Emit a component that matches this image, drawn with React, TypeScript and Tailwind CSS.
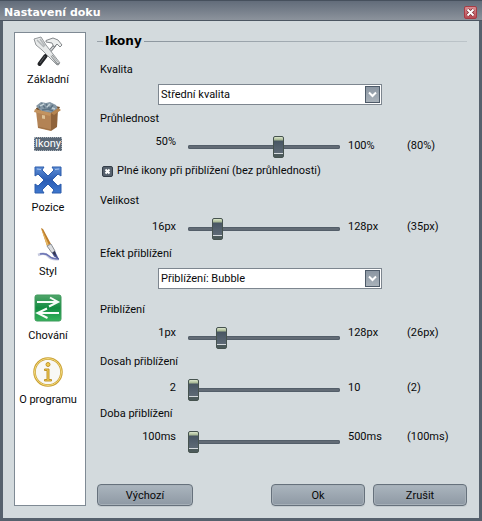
import { useState } from "react";

type Align = "raised" | "middle" | "mixed";

const leftLeading: Record<Align, string> = {
  raised: "leading-[14px]",
  middle: "leading-5",
  mixed: "leading-[14px]",
};
const rightLeading: Record<Align, string> = {
  raised: "leading-[14px]",
  middle: "leading-5",
  mixed: "leading-[22px]",
};

function ToolsIcon() {
  return (
    <svg width="32" height="32" viewBox="0 0 32 32" aria-hidden="true">
      <path d="M23 9 9 26" stroke="#6a6e72" strokeWidth="3" strokeLinecap="round" />
      <path d="M23 9 9 26" stroke="#d0d3d5" strokeWidth="1.500" />
      <path d="M13.500 20 7.500 28" stroke="#222427" strokeWidth="4" strokeLinecap="round" />
      <path d="M13 20 8 27" stroke="#5a5e62" strokeWidth="1" />
      <path d="M14 4.500 21 2l5 2 4 5-2 2-3-3-3 3-2-4-6-1z" fill="#eceeee" stroke="#84888b" strokeWidth="1" />
      <path d="M2 3 9 1l5 8 14 18-3 2L10 14 4 9z" fill="#e8eaea" stroke="#94989b" strokeWidth="1" />
      <path d="M5 4 12 11M8 3l5 7" stroke="#b2b6b8" strokeWidth="1.500" />
      <path d="m20 20 6 8" stroke="#8e9294" strokeWidth="2.500" strokeLinecap="round" />
      <path d="m19 19 7 8" stroke="#e2e4e4" strokeWidth="1" />
    </svg>
  );
}

function BoxIcon() {
  return (
    <svg width="32" height="32" viewBox="0 0 32 32" aria-hidden="true">
      <path d="M4 8 14 4l14 3-3 6H5z" fill="#72502f" />
      <path d="m4 6 5-4 5 1 4-1 6 3 2 4-7 4-9-1z" fill="#8698a6" />
      <path d="m7 8 3-4 3 4M14 4l4 5 3-4M10 10l6-1 5 2" stroke="#5d7384" strokeWidth="1.500" fill="none" />
      <path d="m8 6 4-2M15 7l3-3M20 8l3 1" stroke="#c2d0d6" strokeWidth="1.500" />
      <path d="m4 11 15 2v18L6 28z" fill="#b38355" />
      <path d="m19 13 7-3-1 17-6 4z" fill="#8f633b" />
      <path d="m3 9 16 4-1 3-16-4z" fill="#c3935f" />
      <path d="m19 13 7-5 3 2-7 5z" fill="#b58450" />
      <path d="m10 15 3 .5V19l-3-.5z" fill="#dec398" />
      <path d="m6 27 13 3" stroke="#9e7044" strokeWidth="1" />
    </svg>
  );
}

function ArrowsIcon() {
  return (
    <svg width="30" height="30" viewBox="0 0 30 30" aria-hidden="true">
      <defs>
        <linearGradient id="arrowsFill" x1="0" y1="0" x2="0" y2="1">
          <stop offset="0" stopColor="#5f8fd6" />
          <stop offset="0.500" stopColor="#2a5cb4" />
          <stop offset="1" stopColor="#3f78cf" />
        </linearGradient>
      </defs>
      <path
        d="M2 2h9L9 5l6 6 6-6-2-3h9v9l-3-2-6 6 6 6 3-2v9h-9l2-3-6-6-6 6 2 3H2v-9l3 2 6-6-6-6-3 2z"
        fill="url(#arrowsFill)"
        stroke="#2c5cab"
        strokeWidth="1"
        strokeLinejoin="round"
      />
      <path d="m4 4 4 .5M26 4l-4 .5" stroke="#a9c4ec" strokeWidth="1" />
    </svg>
  );
}

function BrushIcon() {
  return (
    <svg width="32" height="34" viewBox="0 0 32 34" aria-hidden="true">
      <path d="M6 28q7-3 10 1t11 3" fill="none" stroke="#c6cadf" strokeWidth="2.500" />
      <path d="M8 27q6-1 9 2t10 3" fill="none" stroke="#6a73b4" strokeWidth="1.500" />
      <path d="m9 1 2 1 8 15-4 2z" fill="#bd7e2b" />
      <path d="m9 1 2 4 6 13-2 1z" fill="#e6b764" />
      <path d="m15 19 4-2 4 7-3 2z" fill="#dcdee1" stroke="#8b8f95" strokeWidth="1" />
      <path d="m20 26 3-2 4 8.500-5-3z" fill="#47518f" />
      <path d="m20.500 26 2.500-2 1 5z" fill="#33364c" />
    </svg>
  );
}

function SwapIcon() {
  return (
    <svg width="28" height="28" viewBox="0 0 28 28" aria-hidden="true">
      <defs>
        <linearGradient id="swapFill" x1="0" y1="0" x2="0" y2="1">
          <stop offset="0" stopColor="#52a56b" />
          <stop offset="0.500" stopColor="#128c41" />
          <stop offset="1" stopColor="#35b45c" />
        </linearGradient>
      </defs>
      <rect x="1" y="1" width="26" height="26" rx="2" fill="url(#swapFill)" stroke="#3f9a5c" />
      <path
        d="M3 8h20M16 3.500l8 4.500-9 4.500M25 19H4M13 14.500 3.500 19l10 5"
        fill="none"
        stroke="#f7fcf8"
        strokeWidth="2"
      />
    </svg>
  );
}

function InfoIcon() {
  return (
    <svg width="32" height="32" viewBox="0 0 32 32" aria-hidden="true">
      <circle cx="16" cy="16" r="13.500" fill="#f8f8f5" stroke="#c99f34" strokeWidth="2.500" />
      <circle cx="16" cy="16" r="13.500" fill="none" stroke="#f4dc7c" strokeWidth="1" />
      <circle cx="16" cy="8.500" r="2" fill="#f0cb50" stroke="#c0952c" />
      <path d="M12.500 13H17v10.500h2.500V25h-7v-1.500H15v-9h-2.500z" fill="#f0cb50" stroke="#c0952c" />
    </svg>
  );
}

const sections = [
  { name: "Základní", Icon: ToolsIcon },
  { name: "Ikony", Icon: BoxIcon },
  { name: "Pozice", Icon: ArrowsIcon },
  { name: "Styl", Icon: BrushIcon },
  { name: "Chování", Icon: SwapIcon },
  { name: "O programu", Icon: InfoIcon },
];

function SelectField({ id, label, options }: { id: string; label: string; options: string[] }) {
  return (
    <div>
      <label htmlFor={id} className="block leading-[18px]">{label}</label>
      <div className="relative mt-[5px] mr-[82px] ml-[58px]">
        <select
          id={id}
          className="block h-[21px] w-full appearance-none border border-[#7d868f] bg-white pr-5 pl-0.5 leading-4 outline-none"
        >
          {options.map((option) => (
            <option key={option}>{option}</option>
          ))}
        </select>
        <span className="pointer-events-none absolute inset-y-0.5 right-0.5 flex w-[15px] items-center justify-center border border-[#4d5a68] bg-linear-to-b from-[#8b96a2] to-[#a9b2ba]">
          <svg width="9" height="7" viewBox="0 0 9 7" aria-hidden="true">
            <path d="m1 1.500 3.500 3.500L8 1.500" fill="none" stroke="#fff" strokeWidth="2" />
          </svg>
        </span>
      </div>
    </div>
  );
}

interface SliderProps {
  label: string;
  min: number;
  max: number;
  initial: number;
  unit: string;
  align: Align;
}

function SliderField({ label, min, max, initial, unit, align }: SliderProps) {
  const [value, setValue] = useState(initial);
  return (
    <label className="block">
      <span className="block leading-[18px]">{label}</span>
      <span className="mt-[7px] grid h-6 grid-cols-[76px_1fr_51px_65px] items-start">
        <span className={`text-right ${leftLeading[align]}`}>{min}{unit}</span>
        <input
          type="range"
          min={min}
          max={max}
          value={value}
          onChange={(event) => setValue(Number(event.target.value))}
          className="mr-2 ml-3 block h-6 min-w-0 appearance-none bg-transparent outline-none [&::-webkit-slider-runnable-track]:h-1 [&::-webkit-slider-runnable-track]:rounded-xs [&::-webkit-slider-runnable-track]:bg-[#626b75] [&::-webkit-slider-runnable-track]:shadow-[inset_0_0_0_1px_#535e69] [&::-webkit-slider-thumb]:-mt-[9px] [&::-webkit-slider-thumb]:h-[22px] [&::-webkit-slider-thumb]:w-[11px] [&::-webkit-slider-thumb]:appearance-none [&::-webkit-slider-thumb]:rounded-xs [&::-webkit-slider-thumb]:border [&::-webkit-slider-thumb]:border-[#46534f] [&::-webkit-slider-thumb]:bg-[linear-gradient(#dbe6cc_0,#a5b692_3px,#485663_4px,#5e6a76_16px,#d5dadd_16px,#d5dadd_17px,#4c5a5b_17px)]"
        />
        <span className={rightLeading[align]}>{max}{unit}</span>
        <output className={`pl-2 ${rightLeading[align]}`}>({value}{unit})</output>
      </span>
    </label>
  );
}

const buttonClass =
  "h-[22px] rounded-sm border border-[#66717c] bg-linear-to-b from-[#abb5be] to-[#8e99a4] pt-0.5 leading-4 shadow-[inset_0_0_0_1px_#a6b0b8,0_1px_0_#c3cace]";

export default function App() {
  const [active, setActive] = useState("Ikony");
  const [fullIcons, setFullIcons] = useState(true);

  return (
    <div className="flex min-h-screen flex-col border-x-[3px] border-b-[3px] border-[#56616d] bg-[#d3dadd] font-['Roboto','Liberation_Sans',sans-serif] text-[11px] leading-4 text-[#08090a]">
      <header className="-mx-[3px] flex h-[21px] items-center justify-between border-t border-b border-t-[#46505d] border-b-[#4c5662] bg-linear-to-b from-[#626c7a] to-[#8c939c] pr-[5px] pl-1">
        <h1 className="pt-1 font-['DejaVu_Sans',sans-serif] text-[11px] font-bold text-white">Nastavení doku</h1>
        <button type="button" aria-label="Zavřít" className="mt-1 flex size-[13px] items-center justify-center rounded-xs border border-[#a73c45] bg-linear-to-b from-[#d98d92] to-[#b94b54]">
          <svg width="9" height="9" viewBox="0 0 9 9" aria-hidden="true">
            <path d="m1.500 1.500 6 6m0-6-6 6" stroke="#7d2a32" strokeWidth="3.500" />
            <path d="m1.500 1.500 6 6m0-6-6 6" stroke="#fff" strokeWidth="2" />
          </svg>
        </button>
      </header>

      <div className="flex flex-1 pt-[11px] pr-3 pb-3 pl-[11px]">
        <nav className="flex w-[72px] shrink-0 flex-col gap-3 border border-[#7f8a94] bg-white pt-0.5 pr-1">
          {sections.map(({ name, Icon }) => (
            <button key={name} type="button" onClick={() => setActive(name)} className="flex h-[52px] flex-col items-center justify-between">
              <span className="flex h-[34px] items-center"><Icon /></span>
              <span className={`leading-[14px] whitespace-nowrap ${name === active ? "bg-[#5b6876] px-px text-white outline-1 -outline-offset-1 outline-dotted outline-[#aab2ba]" : ""}`}>
                {name}
              </span>
            </button>
          ))}
        </nav>

        <main className="ml-[11px] flex min-w-0 flex-1 flex-col justify-between">
          <section>
            <div className="flex h-[18px] items-center gap-0.5">
              <span className="h-px w-1.5 bg-[#98a1a8]" />
              <h2 className="font-['DejaVu_Sans',sans-serif] text-[12px] font-bold text-black">Ikony</h2>
              <span className="h-px flex-1 bg-linear-to-r from-[#8c969e] to-[#bcc4c9]" />
            </div>

            <form className="mt-[11px] px-[3px]">
              <SelectField id="quality" label="Kvalita" options={["Střední kvalita", "Nízká kvalita", "Vysoká kvalita"]} />
              <div className="mt-[5px]">
                <SliderField label="Průhlednost" min={50} max={100} initial={80} unit="%" align="mixed" />
              </div>
              <label className="mt-[3px] flex items-center gap-1 leading-[18px] whitespace-nowrap">
                <span className="relative ml-0.5 flex size-[11px]">
                  <input
                    type="checkbox"
                    checked={fullIcons}
                    onChange={(event) => setFullIcons(event.target.checked)}
                    className="peer size-[11px] appearance-none rounded-xs border border-[#333d48] bg-[#56616d]"
                  />
                  <svg className="pointer-events-none absolute inset-0 hidden peer-checked:block" width="11" height="11" viewBox="0 0 11 11" aria-hidden="true">
                    <path d="m3.500 3.500 4 4m0-4-4 4" stroke="#fff" strokeWidth="2" />
                  </svg>
                </span>
                Plné ikony při přiblížení (bez průhlednosti)
              </label>
              <div className="mt-3">
                <SliderField label="Velikost" min={16} max={128} initial={35} unit="px" align="middle" />
              </div>
              <div className="mt-1">
                <SelectField id="effect" label="Efekt přiblížení" options={["Přiblížení: Bubble", "Přiblížení: Plochý", "Žádný"]} />
              </div>
              <div className="mt-3 flex flex-col gap-[3px]">
                <SliderField label="Přiblížení" min={1} max={128} initial={26} unit="px" align="raised" />
                <SliderField label="Dosah přiblížení" min={2} max={10} initial={2} unit="" align="middle" />
                <SliderField label="Doba přiblížení" min={100} max={500} initial={100} unit="ms" align="raised" />
              </div>
            </form>
          </section>

          <footer className="flex gap-2">
            <button type="button" className={`mr-auto w-24 ${buttonClass}`}>Výchozí</button>
            <button type="button" className={`w-[94px] ${buttonClass}`}>Ok</button>
            <button type="button" className={`w-[94px] ${buttonClass}`}>Zrušit</button>
          </footer>
        </main>
      </div>
    </div>
  );
}
